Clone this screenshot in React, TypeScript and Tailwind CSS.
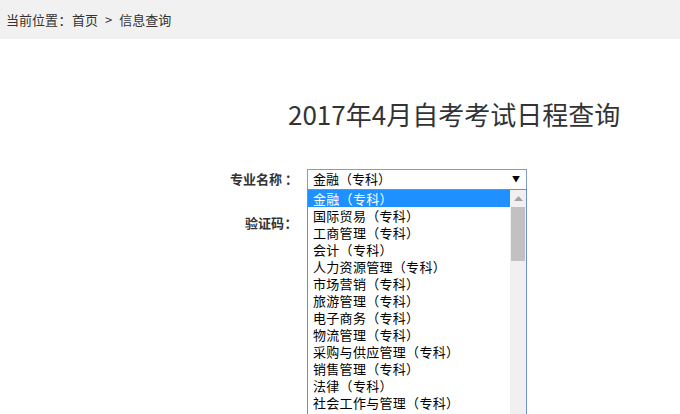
import React from "react";

const items = [
  "金融（专科）",
  "国际贸易（专科）",
  "工商管理（专科）",
  "会计（专科）",
  "人力资源管理（专科）",
  "市场营销（专科）",
  "旅游管理（专科）",
  "电子商务（专科）",
  "物流管理（专科）",
  "采购与供应管理（专科）",
  "销售管理（专科）",
  "法律（专科）",
  "社会工作与管理（专科）",
  "行政管理（专科）",
];

export default function App() {
  return (
    <div
      className="w-[680px] h-[414px] overflow-hidden bg-white text-[#333]"
      style={{ fontFamily: '"Noto Sans CJK SC", "Noto Sans", sans-serif' }}
    >
      <div className="h-[39px] bg-[#f1f1f1] flex items-center pl-[6px] text-[13px] text-[#333]">
        <span>当前位置</span>
        <span className="inline-block w-[14px] text-center">：</span>
        <span>首页</span>
        <span className="mx-[7px]">&gt;</span>
        <span>信息查询</span>
      </div>
      <div className="pl-[288px] pt-[57px] text-[26px] leading-[36px] text-[#333]">
        2017年4月自考考试日程查询
      </div>
      <div className="mt-[37px] flex flex-col">
        <div className="flex items-center h-[20px]">
          <div className="w-[300px] flex justify-end pr-[2px] text-[13px] font-bold text-[#333]">
            <span>专业名称</span>
            <span className="inline-block w-[16px] text-right">：</span>
          </div>
          <div className="relative ml-[7px]">
            <div className="w-[220px] h-[21px] border border-[#7f9ccb] bg-white flex items-center justify-between pl-[5px] pr-[6px] text-[13px] text-black">
              <span>金融（专科）</span>
              <span className="text-[8px]">▼</span>
            </div>
            <div className="absolute left-0 top-[20px] w-[220px] h-[240px] border border-[#6b8fd4] bg-white flex z-10">
              <div className="flex-1 flex flex-col">
                {items.map((t, i) => (
                  <div
                    key={t}
                    className={
                      "h-[17px] leading-[17px] pl-[5px] text-[13px] whitespace-nowrap tracking-[0.3px] " +
                      (i === 0 ? "bg-[#1e90ff] text-white" : "text-black")
                    }
                  >
                    {t}
                  </div>
                ))}
              </div>
              <div className="w-[16px] bg-[#f0f0f0] flex flex-col items-center">
                <div className="h-[17px] flex items-center justify-center">
                  <svg width="9" height="5" viewBox="0 0 9 5">
                    <polygon points="0,5 4.5,0 9,5" fill="#a3a3a3" />
                  </svg>
                </div>
                <div className="w-[14px] h-[54px] bg-[#c1c1c1]" />
              </div>
            </div>
          </div>
        </div>
        <div className="flex items-center h-[20px] mt-[24px]">
          <div className="w-[300px] flex justify-end pr-[2px] text-[13px] font-bold text-[#333]">
            <span>验证码</span>
            <span className="inline-block w-[14px] text-center">：</span>
          </div>
        </div>
      </div>
    </div>
  );
}
